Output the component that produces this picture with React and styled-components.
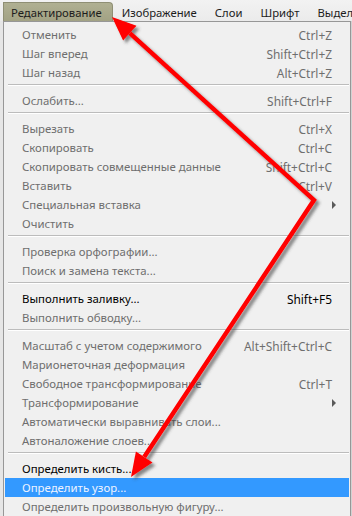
import React from "react";
import styled, { createGlobalStyle } from "styled-components";

const Global = createGlobalStyle`
  html, body { margin: 0; padding: 0; background: #e9e9e9; }
  body { font-family: "Noto Sans", "Open Sans", "DejaVu Sans", sans-serif; }
`;

const Page = styled.div`
  position: relative;
  width: 352px;
  height: 516px;
  overflow: hidden;
  background: #e6e6e6;
`;

const MenuBar = styled.div`
  display: flex;
  align-items: stretch;
  height: 21px;
  padding-left: 3px;
  background: linear-gradient(#f2f2f2, #ebebeb);
  font-size: 11.3px;
  color: #1c1c1c;
  white-space: nowrap;
`;

const BarItem = styled.div`
  display: flex;
  align-items: center;
  margin-top: 2px;
  padding: ${(p) => (p.$active ? "0 10px 0 7px" : "0 8px 0 8px")};
  background: ${(p) => (p.$active ? "linear-gradient(#b0b092, #a2a284)" : "transparent")};
  border-radius: ${(p) => (p.$active ? "0 4px 0 0" : "0")};
  border: ${(p) => (p.$active ? "1px solid #8f8f74" : "1px solid transparent")};
  border-bottom: none;
`;

const Dropdown = styled.div`
  margin-left: 3px;
  width: 344px;
  border: 1px solid #979797;
  background: #f0f0f0;
  padding: 3px 1px 0 1px;
  box-shadow: 2px 0 0 #d2d2d2;
  height: 500px;
`;

const Item = styled.div`
  display: flex;
  align-items: center;
  justify-content: space-between;
  height: 19px;
  padding: 0 17px 0 17px;
  font-size: 11.4px;
  white-space: nowrap;
  color: ${(p) => (p.$active ? "#eef3ff" : p.$enabled ? "#000" : "#6e6e6e")};
  background: ${(p) => (p.$active ? "#3399ff" : "transparent")};
`;

const Label = styled.span``;

const Shortcut = styled.span`
  display: flex;
  align-items: center;
  font-size: 11.9px;
`;

const SubArrow = styled.span`
  width: 0;
  height: 0;
  border-top: 4px solid transparent;
  border-bottom: 4px solid transparent;
  border-left: 4px solid #5a5a5a;
  margin-right: -11px;
`;

const Separator = styled.div`
  height: 1px;
  margin: 2px 0 5px 3px;
  background: #bcbcbc;
  border-bottom: 1px solid #ffffff;
`;

const Overlay = styled.svg`
  position: absolute;
  left: 0;
  top: 0;
  pointer-events: none;
`;

const groups = [
  [
    ["Отменить", "Ctrl+Z"],
    ["Шаг вперед", "Shift+Ctrl+Z"],
    ["Шаг назад", "Alt+Ctrl+Z"],
  ],
  [["Ослабить...", "Shift+Ctrl+F"]],
  [
    ["Вырезать", "Ctrl+X"],
    ["Скопировать", "Ctrl+C"],
    ["Скопировать совмещенные данные", "Shift+Ctrl+C"],
    ["Вставить", "Ctrl+V"],
    ["Специальная вставка", "", { sub: true }],
    ["Очистить", ""],
  ],
  [
    ["Проверка орфографии...", ""],
    ["Поиск и замена текста...", ""],
  ],
  [
    ["Выполнить заливку...", "Shift+F5", { enabled: true }],
    ["Выполнить обводку...", ""],
  ],
  [
    ["Масштаб с учетом содержимого", "Alt+Shift+Ctrl+C"],
    ["Марионеточная деформация", ""],
    ["Свободное трансформирование", "Ctrl+T"],
    ["Трансформирование", "", { sub: true }],
    ["Автоматически выравнивать слои...", ""],
    ["Автоналожение слоев...", ""],
  ],
  [
    ["Определить кисть...", "", { enabled: true }],
    ["Определить узор...", "", { active: true }],
    ["Определить произвольную фигуру...", ""],
  ],
];

const barItems = ["Редактирование", "Изображение", "Слои", "Шрифт", "Выделение"];

export default function App() {
  return (
    <Page>
      <Global />
      <MenuBar>
        {barItems.map((t, i) => (
          <BarItem key={t} $active={i === 0}>
            {t}
          </BarItem>
        ))}
      </MenuBar>
      <Dropdown>
        {groups.map((g, gi) => (
          <React.Fragment key={gi}>
            {gi > 0 && <Separator />}
            {g.map(([label, sc, opts = {}]) => (
              <Item key={label} $enabled={opts.enabled} $active={opts.active}>
                <Label>{label}</Label>
                <Shortcut>
                  {sc}
                  {opts.sub && <SubArrow />}
                </Shortcut>
              </Item>
            ))}
          </React.Fragment>
        ))}
      </Dropdown>
      <Overlay width="352" height="516" viewBox="0 0 352 516">
        <defs>
          <filter id="sh" x="-20%" y="-20%" width="140%" height="140%">
            <feDropShadow dx="3" dy="3" stdDeviation="1.6" floodColor="#404040" floodOpacity="0.6" />
          </filter>
        </defs>
        <g filter="url(#sh)" fill="#ff0000" stroke="#ff0000">
          <polyline
            points="129.8,33.1 314,200 144.2,457"
            fill="none"
            strokeWidth="4.5"
            strokeLinejoin="miter"
          />
          <polygon points="112,17 136.5,25.7 123.1,40.5" stroke="none" />
          <polygon points="131,477 152.5,462.5 135.9,451.5" stroke="none" />
        </g>
      </Overlay>
    </Page>
  );
}
